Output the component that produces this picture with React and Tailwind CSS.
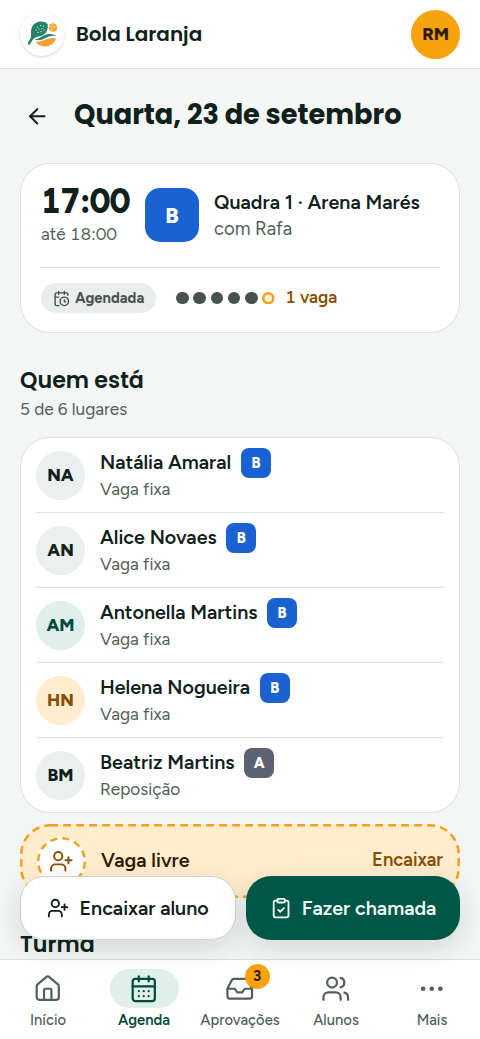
import { useState } from 'react';
import {
  ArrowLeft,
  CalendarClock,
  CalendarDays,
  ClipboardCheck,
  Ellipsis,
  House,
  Inbox,
  UserPlus,
  Users
} from 'lucide-react';
import clsx from 'clsx';

const students = [
  { initials: 'NA', name: 'Natália Amaral', kind: 'Vaga fixa', level: 'B', tone: 'neutral' },
  { initials: 'AN', name: 'Alice Novaes', kind: 'Vaga fixa', level: 'B', tone: 'neutral' },
  { initials: 'AM', name: 'Antonella Martins', kind: 'Vaga fixa', level: 'B', tone: 'green' },
  { initials: 'HN', name: 'Helena Nogueira', kind: 'Vaga fixa', level: 'B', tone: 'amber' },
  { initials: 'BM', name: 'Beatriz Martins', kind: 'Reposição', level: 'A', tone: 'neutral' }
];

const tones = {
  neutral: 'bg-[#ebefed] text-[#10201b]',
  green: 'bg-[#e0efe9] text-[#00493c]',
  amber: 'bg-[#ffedce] text-[#884f00]'
};

const tabs = [
  { id: 'inicio', label: 'Início', icon: House },
  { id: 'agenda', label: 'Agenda', icon: CalendarDays },
  { id: 'aprovacoes', label: 'Aprovações', icon: Inbox, count: 3 },
  { id: 'alunos', label: 'Alunos', icon: Users },
  { id: 'mais', label: 'Mais', icon: Ellipsis }
];

function Logo() {
  return (
    <div className="flex size-[44px] items-center justify-center rounded-full bg-white shadow-[0_1px_3px_rgba(16,32,27,0.18)]">
      <svg viewBox="0 0 31 26" className="h-[26px] w-[31px]" fill="none">
        {/* racket */}
        <path d="M4 12C3.500 6 7.500 1 13.500.6c3 0 5.500.7 7.200 2.600.8 5-1.500 9.800-6.200 11.600-2.700 1-5 .8-7 2.200L4.500 19" fill="#248267" />
        <path d="M5.500 14.500 5 17.500 2 22.300" stroke="#248267" strokeWidth="2.6" strokeLinecap="round" strokeLinejoin="round" />
        <g fill="#fff">
          <circle cx="10.500" cy="6" r=".6" />
          <circle cx="13.500" cy="4.500" r=".6" />
          <circle cx="16.500" cy="5" r=".6" />
          <circle cx="9" cy="9" r=".6" />
          <circle cx="12" cy="8" r=".6" />
          <circle cx="15" cy="7.600" r=".6" />
          <circle cx="11" cy="11.300" r=".6" />
          <circle cx="14" cy="10.700" r=".6" />
          <circle cx="17" cy="9" r=".6" />
        </g>
        {/* ball */}
        <circle cx="26" cy="6.500" r="4.300" fill="#f0a12f" />
        <path d="M22.300 6c2 .3 3.500-1 3.700-3.400M24.300 9.500c0-2.500 2.500-4.300 5.500-3.500" stroke="#fff" strokeWidth=".6" />
        {/* dunes */}
        <path d="M7.500 18.500c5.500-.7 8.500-5.300 14.500-5.600 3 0 5.500.7 7.500 2-5.500-.6-8.500.6-12 2.700-3.200 1.800-6.500 2.300-10 .9Z" fill="#248267" />
        <path d="M8.500 20.800c7 .5 11.500-5 20.500-3.600-1.500 5-6 8.300-11.500 8.300-3.800 0-7-1.900-9-4.700Z" fill="#f0a12f" />
      </svg>
    </div>
  );
}

function Header() {
  return (
    <header className="flex h-[69px] shrink-0 items-center border-b border-[#dbe1de] bg-white px-5">
      <Logo />
      <span className="ml-3 flex-1 font-['Poppins','Inter',sans-serif] text-[20px] font-semibold">Bola Laranja</span>
      <div className="flex size-[49px] items-center justify-center rounded-full bg-[#f8a20d] pt-px text-[17.6px] font-extrabold text-[#2f1b00]">
        RM
      </div>
    </header>
  );
}

function ClassCard() {
  return (
    <section className="h-[170px] rounded-[30px] border border-[#dde3e0] bg-white px-[19px] pt-[19px]">
      <div className="flex h-[84px]">
        <div className="w-[105px] tabular-nums">
          <div className="origin-left scale-x-[0.91] text-[35.6px] leading-[35px] font-extrabold tracking-[-0.7px]">17:00</div>
          <div className="mt-[4px] pl-px text-[17.2px] leading-[24px] text-[#52605b]">até 18:00</div>
        </div>
        <div className="mt-[5px] flex size-[54px] shrink-0 items-center justify-center rounded-[15px] bg-[#1a62d1] text-[22px] font-extrabold text-white">
          B
        </div>
        <div className="ml-[15px] pt-[6px] whitespace-nowrap">
          <div className="text-[19.7px] leading-[27px] font-semibold">Quadra 1 · Arena Marés</div>
          <div className="text-[18.5px] leading-[25px] text-[#52605b]">com Rafa</div>
        </div>
      </div>
      <div className="flex items-center border-t border-[#dde3e0] pt-[15px]">
        <span className="ml-px flex h-[30px] w-[115px] items-center gap-[5px] rounded-full bg-[#e9eeec] pl-[12px] text-[14.8px] font-bold text-[#46534e]">
          <CalendarClock size={17} strokeWidth={2} className="shrink-0" />
          Agendada
        </span>
        <div className="ml-[20px] flex gap-[4.8px]">
          {[1, 2, 3, 4, 5].map((seat) => (
            <span key={seat} className="size-[12.5px] rounded-full bg-[#46524e]" />
          ))}
          <svg viewBox="0 0 12.5 12.5" className="size-[12.5px]">
            <circle cx="6.25" cy="6.25" r="5.05" fill="#ffedce" stroke="#f5a11a" strokeWidth="2.4" />
          </svg>
        </div>
        <span className="ml-[10px] text-[17.2px] font-semibold tabular-nums text-[#884f00]">1 vaga</span>
      </div>
    </section>
  );
}

function StudentRow({ student }) {
  return (
    <li className="flex h-[75px] border-b border-[#dde3e0] pt-[10px] last:border-b-0">
      <div className={clsx('mt-[3px] flex size-[49px] items-center justify-center rounded-full text-[17.6px] font-extrabold', tones[student.tone])}>
        {student.initials}
      </div>
      <div className="ml-[15px]">
        <div className="flex h-[30px] items-center gap-[9.7px]">
          <span className="text-[19.7px] font-semibold">{student.name}</span>
          <span
            className={clsx(
              'flex size-[30px] items-center justify-center rounded-[8px] text-[14.8px] font-extrabold text-white',
              student.level === 'B' ? 'bg-[#1a62d1]' : 'bg-[#5c6370]'
            )}
          >
            {student.level}
          </span>
        </div>
        <div className="text-[17.2px] leading-[23px] text-[#52605b]">{student.kind}</div>
      </div>
    </li>
  );
}

function FreeSpot() {
  return (
    <div className="relative mt-[11px] flex h-[74px] shrink-0 items-center rounded-[30px] bg-[#ffedce] px-[17px]">
      {/* dashed outline */}
      <svg viewBox="0 0 440 74" className="absolute inset-0 h-[74px] w-[440px]" fill="none">
        <rect x="1.25" y="1.25" width="437.5" height="71.5" rx="29" stroke="#f0a01c" strokeWidth="2.5" strokeDasharray="7.8 5.2" />
      </svg>
      <div className="relative flex size-[49px] items-center justify-center rounded-full bg-white text-[#884f00]">
        <svg viewBox="0 0 49 49" className="absolute inset-0 size-[49px]" fill="none">
          <circle cx="24.5" cy="24.5" r="23.3" stroke="#f0a01c" strokeWidth="2.4" strokeDasharray="7.3 4.9" />
        </svg>
        <UserPlus size={24.6} strokeWidth={1.9} />
      </div>
      <span className="ml-[15px] flex-1 text-[19.7px] font-semibold text-[#2f1b00]">Vaga livre</span>
      <span className="text-[18.4px] font-semibold text-[#884f00]">Encaixar</span>
    </div>
  );
}

function ActionBar() {
  return (
    <div className="absolute inset-x-0 bottom-[19px] flex gap-[10px] px-5">
      <button className="flex h-[64px] w-[216px] items-center justify-center gap-[10px] rounded-[25px] border border-[#cbd4d0] bg-white pt-px text-[19.7px] font-semibold whitespace-nowrap shadow-[0_8px_28px_rgba(16,32,27,0.14)]">
        <UserPlus size={22.2} strokeWidth={2} />
        Encaixar aluno
      </button>
      <button className="flex h-[64px] w-[214px] items-center justify-center gap-[10px] rounded-[25px] bg-[#005747] pt-px text-[19.7px] font-semibold whitespace-nowrap text-[#effaf6] shadow-[0_8px_28px_rgba(16,32,27,0.14)]">
        <ClipboardCheck size={22.2} strokeWidth={2} />
        Fazer chamada
      </button>
    </div>
  );
}

function TabBar({ active, onChange }) {
  return (
    <nav className="grid h-[80px] shrink-0 grid-cols-5 border-t border-[#dbe1de] bg-white pt-[9px]">
      {tabs.map(({ id, label, icon: Icon, count }) => (
        <button
          key={id}
          onClick={() => onChange(id)}
          className={clsx('flex flex-col items-center', active === id ? 'text-[#00493c]' : 'text-[#52605b]')}
        >
          <span className={clsx('relative flex h-[39px] w-[69px] items-center justify-center rounded-full', active === id && 'bg-[#e0efe9]')}>
            <Icon size={29.5} strokeWidth={1.8} />
            {count && (
              <span className="absolute -top-[5px] left-[39px] flex size-[25px] items-center justify-center rounded-full bg-[#f8a20d] text-[14.8px] font-bold text-[#2f1b00]">
                {count}
              </span>
            )}
          </span>
          <span className={clsx('mt-[2px] text-[14.8px] leading-[20px]', active === id ? 'font-semibold' : 'font-medium')}>{label}</span>
        </button>
      ))}
    </nav>
  );
}

export default function App() {
  const [tab, setTab] = useState('agenda');

  return (
    <div className="flex h-[1039px] w-[480px] flex-col overflow-hidden bg-[#f3f6f4] font-['Figtree','Inter',sans-serif] text-[#10201b]">
      <Header />

      <div className="relative flex min-h-0 flex-1 flex-col">
        <main className="flex min-h-0 flex-1 flex-col overflow-hidden px-5">
          <div className="flex h-[94px] shrink-0 items-center">
            <ArrowLeft size={24.6} strokeWidth={2} className="ml-[4.6px]" />
            <h1 className="mb-[2px] ml-[24.8px] font-['Poppins','Inter',sans-serif] text-[27.2px] font-bold whitespace-nowrap">Quarta, 23 de setembro</h1>
          </div>

          <ClassCard />

          <h2 className="mt-[34px] font-['Poppins','Inter',sans-serif] text-[22.2px] leading-[28px] font-semibold">Quem está</h2>
          <p className="mt-[2px] text-[17.2px] leading-[24px] text-[#52605b]">5 de 6 lugares</p>

          <ul className="mt-[16px] h-[376px] shrink-0 rounded-[30px] border border-[#dde3e0] bg-white px-[15px]">
            {students.map((student) => (
              <StudentRow key={student.initials} student={student} />
            ))}
          </ul>

          <FreeSpot />

          <h2 className="mt-[33px] font-['Poppins','Inter',sans-serif] text-[22.2px] leading-[28px] font-semibold">Turma</h2>
        </main>

        <ActionBar />
      </div>

      <TabBar active={tab} onChange={setTab} />
    </div>
  );
}
